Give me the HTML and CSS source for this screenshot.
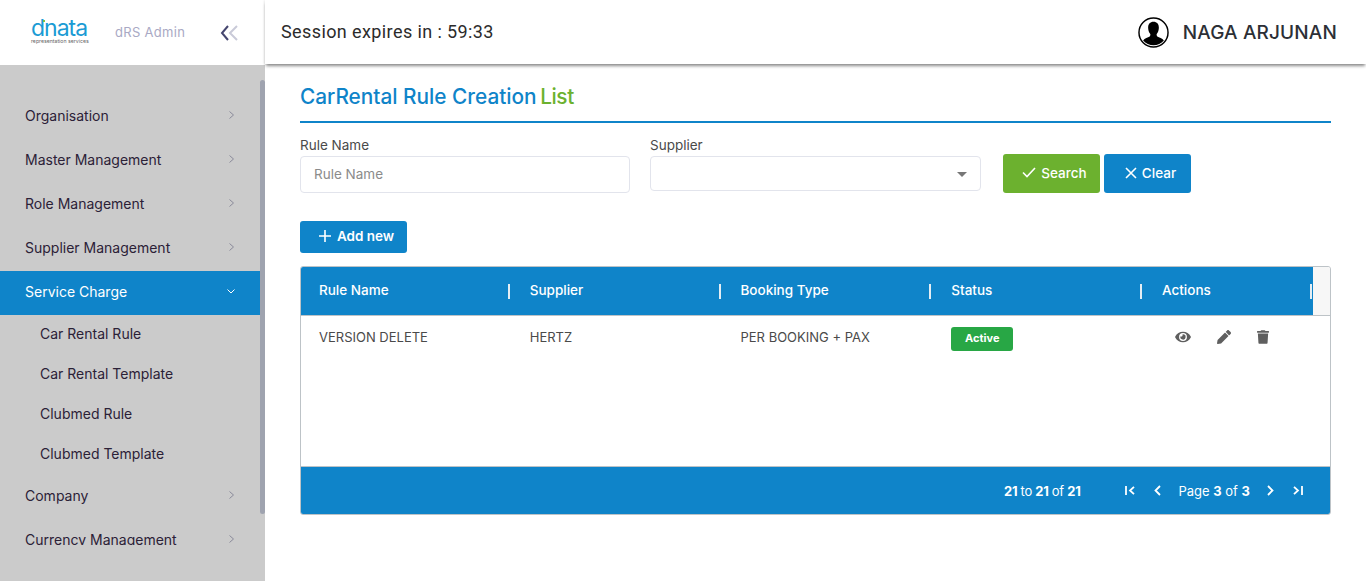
FILE: index.html
```html
<!DOCTYPE html>
<html lang="en">
    <head>
        <meta charset="UTF-8">
        <title>CarRental Rule Creation List</title>
        <link rel="stylesheet" href="styles.css">
    </head>
    <body>
        <div class="page">
            <!-- sidebar -->
            <aside class="sidebar">
                <div class="brand">
                    <div class="logo">
                        <div class="logoName">dnata<span class="logoDot"></span></div>
                        <div class="logoSub">representation services</div>
                    </div>
                    <div class="brandTitle">dRS Admin</div>
                    <svg class="collapse" width="20" height="18" viewBox="0 0 20 18">
                        <path d="M8 2 L2 9 L8 16" fill="none" stroke="#45466f" stroke-width="2"/>
                        <path d="M17 2 L10 9 L17 16" fill="none" stroke="#c9cad8" stroke-width="2"/>
                    </svg>
                </div>
                <div class="menuWrap">
                    <ul class="menu">
                        <li class="menuItem">Organisation<svg class="chev" viewBox="0 0 5 8"><path d="M0.5 0.500 L4.500 4 L0.500 7.500"/></svg></li>
                        <li class="menuItem">Master Management<svg class="chev" viewBox="0 0 5 8"><path d="M0.5 0.500 L4.500 4 L0.500 7.500"/></svg></li>
                        <li class="menuItem">Role Management<svg class="chev" viewBox="0 0 5 8"><path d="M0.5 0.500 L4.500 4 L0.500 7.500"/></svg></li>
                        <li class="menuItem">Supplier Management<svg class="chev" viewBox="0 0 5 8"><path d="M0.5 0.500 L4.500 4 L0.500 7.500"/></svg></li>
                        <li class="menuItem active">Service Charge
                            <svg class="chevDown" viewBox="0 0 8 5"><path d="M0.5 0.500 L4 4 L7.500 0.500"/></svg>
                        </li>
                        <li class="subItem">Car Rental Rule</li>
                        <li class="subItem">Car Rental Template</li>
                        <li class="subItem">Clubmed Rule</li>
                        <li class="subItem">Clubmed Template</li>
                        <li class="menuItem">Company<svg class="chev" viewBox="0 0 5 8"><path d="M0.5 0.500 L4.500 4 L0.500 7.500"/></svg></li>
                        <li class="menuItem">Currency Management<svg class="chev" viewBox="0 0 5 8"><path d="M0.5 0.500 L4.500 4 L0.500 7.500"/></svg></li>
                    </ul>
                    <div class="scrollThumb"></div>
                </div>
            </aside>

            <div class="main">
                <!-- top bar -->
                <header class="topbar">
                    <div class="session">Session expires in : 59:33</div>
                    <div class="user">
                        <svg width="31" height="31" viewBox="0 0 32 32">
                            <circle cx="16" cy="16" r="15" fill="#fff" stroke="#000" stroke-width="1.500"/>
                            <path d="M16 5c-3.800 0-5.800 2.800-5.500 6.500.2 2.400.9 4.300 2 5.800.5.700.4 2-.4 2.700-1.800 1.200-5.300 1.800-6.800 4.200a14.200 14.200 0 0 0 21.400 0c-1.500-2.400-5-3-6.800-4.200-.8-.7-.9-2-.4-2.700 1.100-1.500 1.800-3.400 2-5.800C21.800 7.800 19.800 5 16 5z" fill="#000"/>
                        </svg>
                        <span class="userName">NAGA ARJUNAN</span>
                    </div>
                </header>

                <main class="content">
                    <h1 class="pageTitle">CarRental Rule Creation <span class="green">List</span></h1>

                    <div class="filters">
                        <div class="field">
                            <label class="fieldLabel">Rule Name</label>
                            <div class="input placeholder">Rule Name</div>
                        </div>
                        <div class="field">
                            <label class="fieldLabel">Supplier</label>
                            <div class="input select"><span class="caret"></span></div>
                        </div>
                        <div class="filterButtons">
                            <div class="btn btnGreen">
                                <svg width="14" height="11" viewBox="0 0 14 11"><path d="M1 5.500 L5 9.500 L13 1" fill="none" stroke="#fff" stroke-width="1.600"/></svg>
                                Search
                            </div>
                            <div class="btn btnBlue">
                                <svg width="12" height="12" viewBox="0 0 12 12"><path d="M1 1 L11 11 M11 1 L1 11" fill="none" stroke="#fff" stroke-width="1.600"/></svg>
                                Clear
                            </div>
                        </div>
                    </div>

                    <div class="btn btnBlue addNew">
                        <svg width="12" height="12" viewBox="0 0 12 12"><path d="M6 0 V12 M0 6 H12" fill="none" stroke="#fff" stroke-width="1.600"/></svg>
                        Add new
                    </div>

                    <!-- grid -->
                    <div class="grid">
                        <div class="gridHead">
                            <div class="headCells">
                                <div class="headCell">Rule Name</div>
                                <div class="headCell">Supplier</div>
                                <div class="headCell">Booking Type</div>
                                <div class="headCell">Status</div>
                                <div class="headCell">Actions</div>
                            </div>
                            <div class="headGap"></div>
                        </div>
                        <div class="gridBody">
                            <div class="row">
                                <div class="cell">VERSION DELETE</div>
                                <div class="cell">HERTZ</div>
                                <div class="cell">PER BOOKING + PAX</div>
                                <div class="cell"><span class="badge">Active</span></div>
                                <div class="cell actions">
                                    <svg width="16" height="14" viewBox="0 0 576 512"><path fill="#5f5f5f" d="M572.52 241.4C518.29 135.59 410.93 64 288 64S57.68 135.64 3.48 241.41a32.35 32.35 0 0 0 0 29.19C57.71 376.41 165.07 448 288 448s230.32-71.64 284.52-177.41a32.35 32.35 0 0 0 0-29.19zM288 400a144 144 0 1 1 144-144 143.93 143.93 0 0 1-144 144zm0-240a95.31 95.31 0 0 0-25.31 3.79 47.85 47.85 0 0 1-66.9 66.9A95.78 95.78 0 1 0 288 160z"/></svg>
                                    <svg width="14" height="14" viewBox="0 0 512 512"><path fill="#5f5f5f" d="M497.9 142.1l-46.1 46.1c-4.7 4.7-12.3 4.7-17 0l-111-111c-4.7-4.7-4.7-12.3 0-17l46.1-46.1c18.7-18.7 49.100-18.700 67.900 0l60.100 60.100c18.800 18.700 18.800 49.100 0 67.900zM284.200 99.800L21.600 362.400.400 483.900c-2.900 16.400 11.400 30.600 27.800 27.800l121.500-21.300 262.600-262.600c4.700-4.700 4.700-12.300 0-17l-111-111c-4.800-4.700-12.400-4.700-17.100 0z"/></svg>
                                    <svg width="12" height="14" viewBox="0 0 448 512"><path fill="#5f5f5f" d="M432 32H312l-9.400-18.700A24 24 0 0 0 281.100 0H166.800a23.720 23.720 0 0 0-21.400 13.300L136 32H16A16 16 0 0 0 0 48v32a16 16 0 0 0 16 16h416a16 16 0 0 0 16-16V48a16 16 0 0 0-16-16zM53.200 467a48 48 0 0 0 47.900 45h245.800a48 48 0 0 0 47.900-45L416 128H32z"/></svg>
                                </div>
                            </div>
                        </div>
                        <div class="gridFoot">
                            <div class="summary"><b>21</b> to <b>21</b> of <b>21</b></div>
                            <div class="pager">
                                <svg width="10" height="9" viewBox="0 0 10 9"><path d="M1 0 V9 M9 .8 L5 4.500 L9 8.200" fill="none" stroke="#fff" stroke-width="1.800"/></svg>
                                <svg class="pagerPrev" width="7" height="11" viewBox="0 0 7 11"><path d="M6 1 L1.500 5.500 L6 10" fill="none" stroke="#fff" stroke-width="1.800"/></svg>
                                <span class="pageText">Page <b>3</b> of <b>3</b></span>
                                <svg class="pagerNext" width="7" height="11" viewBox="0 0 7 11"><path d="M1 1 L5.500 5.500 L1 10" fill="none" stroke="#fff" stroke-width="1.800"/></svg>
                                <svg width="10" height="9" viewBox="0 0 10 9"><path d="M1 .8 L5 4.500 L1 8.200 M9 0 V9" fill="none" stroke="#fff" stroke-width="1.800"/></svg>
                            </div>
                        </div>
                    </div>
                </main>
            </div>
        </div>
    </body>
</html>
```

FILE: styles.css
```css
html, body{
    margin: 0;
    height: 100%;
    overflow: hidden;
}

body{
    font-family: Inter, "Noto Sans", sans-serif;
    font-size: 13.5px;
    color: #4a4a4a;
    background-color: #fff;
}

.page{
    display: flex;
    height: 581px;
}

/*************************************************************************************************/

/* sidebar */
.sidebar{
    width: 265px;
    flex-shrink: 0;
    background-color: #cbcbcb;
    display: flex;
    flex-direction: column;
}

.brand{
    height: 65px;
    flex-shrink: 0;
    background-color: #fff;
    display: flex;
    align-items: center;
    padding-left: 31px;
}

.logo{
    width: 84px;
    color: #1b9bd4;
    margin-bottom: 4px;
}

.logoName{
    position: relative;
    font-size: 23px;
    line-height: 20px;
    letter-spacing: -1px;
}

/* dの上の緑の点 */
.logoDot{
    position: absolute;
    left: 12px;
    top: 2px;
    width: 2px;
    height: 2px;
    background-color: #7cc242;
}

.logoSub{
    font-size: 5.2px;
    line-height: 6px;
    color: #666;
    white-space: nowrap;
}

.brandTitle{
    color: #a9a9c4;
    font-size: 13px;
    white-space: nowrap;
    letter-spacing: 0.3px;
    margin-bottom: 2px;
}

.collapse{
    margin-left: 35px;
}

.menuWrap{
    flex: 1;
    display: flex;
    min-height: 0;
}

.menu{
    list-style: none;
    margin: 0;
    padding: 30px 0 0;
    width: 260px;
    height: 480px;
    overflow: hidden;
    box-sizing: border-box;
    font-size: 14px;
}

.menuItem{
    height: 44px;
    box-sizing: border-box;
    padding: 0 26px 4px 25px;
    display: flex;
    align-items: center;
    justify-content: space-between;
    color: #2b2137;
}

.chev{
    width: 5px;
    height: 8px;
    fill: none;
    stroke: #8a8a9a;
}

.chevDown{
    width: 8px;
    height: 5px;
    fill: none;
    stroke: #fff;
    margin-right: -1px;
}

.menuItem.active{
    background-color: #0f84c9;
    color: #fff;
}

.subItem{
    height: 40px;
    box-sizing: border-box;
    padding: 0 0 4px 40px;
    display: flex;
    align-items: center;
    color: #2b2137;
}

.scrollThumb{
    width: 5px;
    height: 434px;
    margin-top: 15px;
    background-color: #9fa3af;
    border-radius: 3px;
}

/*************************************************************************************************/

/* top bar */
.main{
    flex: 1;
    min-width: 0;
}

.topbar{
    height: 64px;
    background-color: #fff;
    box-shadow: 0 3px 3px -1px rgba(0, 0, 0, 0.45), -1px 0 2px rgba(0, 0, 0, 0.08);
    display: flex;
    align-items: center;
    justify-content: space-between;
    padding: 0 29px 0 16px;
}

.session{
    font-family: Roboto, sans-serif;
    font-size: 18px;
    letter-spacing: 0.4px;
    color: #2b2b2b;
    margin-bottom: 2px;
}

.user{
    display: flex;
    align-items: center;
    gap: 14px;
}

.userName{
    font-family: Inter, sans-serif;
    font-size: 19px;
    font-weight: 500;
    letter-spacing: 0.15px;
    color: #2c2f36;
}

/*************************************************************************************************/

/* content */
.content{
    padding: 20px 35px 0;
}

.pageTitle{
    margin: 0;
    height: 37px;
    font-size: 20.8px;
    font-weight: 500;
    line-height: 26px;
    color: #0f84c9;
    border-bottom: 2px solid #0f84c9;
}

.green{
    color: #6cb12f;
    letter-spacing: -0.4px;
    margin-left: -2px;
}

.filters{
    display: flex;
    margin-top: 13px;
    align-items: flex-start;
}

.field{
    width: 330px;
    margin-right: 20px;
}

.field + .field{
    width: 331px;
    margin-right: 22px;
}

.fieldLabel{
    display: block;
    height: 20px;
    line-height: 18px;
}

.input{
    height: 35px;
    border: 1px solid #e2e4ec;
    border-radius: 4px;
    background-color: #fff;
    line-height: 35px;
    padding: 0 13px;
}

.field + .field .input{
    height: 33px;
}

.placeholder{
    color: #8b8b8b;
}

.select{
    position: relative;
}

.caret{
    position: absolute;
    right: 13px;
    top: 15px;
    border-left: 5px solid transparent;
    border-right: 5px solid transparent;
    border-top: 5px solid #777;
}

.filterButtons{
    display: flex;
    gap: 4px;
    margin-top: 18px;
}

.btn{
    height: 39px;
    box-sizing: border-box;
    padding: 0 0 2px 6px;
    border-radius: 3px;
    display: flex;
    align-items: center;
    justify-content: center;
    gap: 5px;
    color: #fff;
    font-weight: 500;
}

.btnGreen{
    width: 97px;
    background-color: #6cb12f;
}

.btnBlue{
    width: 87px;
    background-color: #0f84c9;
}

.addNew{
    width: 107px;
    height: 32px;
    margin-top: 28px;
    font-weight: 600;
    gap: 6px;
}

/*************************************************************************************************/

/* grid */
.grid{
    margin-top: 13px;
    border: 1px solid #bdc3c7;
    border-radius: 3px;
    overflow: hidden;
}

.gridHead{
    display: flex;
    height: 48px;
    background-color: #f7f7f7;
    border-bottom: 1px solid #bdc3c7;
}

.headCells{
    display: flex;
    background-color: #0f84c9;
    color: #fff;
    width: 1012px;
}

.headCell{
    width: 210.75px;
    box-sizing: border-box;
    padding-left: 18px;
    line-height: 46px;
    position: relative;
    font-weight: 500;
}

.headCell:last-child{
    width: 169px;
}

.headCell::after{
    content: "";
    position: absolute;
    right: 2px;
    top: 17px;
    width: 2px;
    height: 15px;
    background-color: #e4edf3;
}

.headCell:last-child::after{
    right: 1px;
}

.gridBody{
    height: 150px;
}

.row{
    display: flex;
    height: 42px;
}

.cell{
    width: 210.75px;
    flex-shrink: 0;
    box-sizing: border-box;
    padding-left: 18px;
    line-height: 42px;
    white-space: nowrap;
    font-size: 13px;
}

.badge{
    display: inline-block;
    width: 62px;
    height: 24px;
    margin-top: 2px;
    line-height: 22px;
    text-align: center;
    background-color: #28a745;
    color: #fff;
    font-size: 11px;
    font-weight: 700;
    border-radius: 3px;
    vertical-align: middle;
}

.actions{
    display: flex;
    align-items: center;
    gap: 26px;
    padding-left: 31px;
}

.gridFoot{
    height: 48px;
    box-sizing: border-box;
    background-color: #0f84c9;
    border-top: 1px solid #bdc3c7;
    color: #fff;
    display: flex;
    align-items: center;
    justify-content: flex-end;
    padding-right: 27px;
    font-size: 13px;
}

.gridFoot b{
    font-weight: 700;
}

.summary{
    letter-spacing: -0.3px;
}

.pager{
    display: flex;
    align-items: center;
    margin-left: 45px;
}

.pagerPrev{
    margin-left: 19px;
    margin-right: 17px;
}

.pagerNext{
    margin-left: 17px;
    margin-right: 19px;
}
```
